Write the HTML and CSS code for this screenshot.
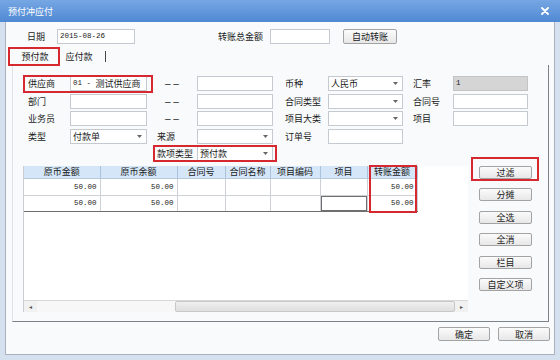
FILE: index.html
```html
<!DOCTYPE html>
<html lang="zh">
<head>
<meta charset="utf-8">
<link rel="stylesheet" href="styles.css">
</head>
<body>
<div class="window">
  <div class="titlebar">
    <span class="title">预付冲应付</span>
    <svg class="close" width="8" height="8" viewBox="0 0 8 8"><path d="M1 1L7 7M7 1L1 7" stroke="#fff" stroke-width="1.8" stroke-linecap="round"/></svg>
  </div>
  <div class="client">
    <div class="toprow">
      <span class="lbl date-lbl">日期</span>
      <div class="input date-in"><span class="num">2015-08-26</span></div>
      <span class="lbl total-lbl">转账总金额</span>
      <div class="input total-in"></div>
      <button class="btn auto-btn">自动转账</button>
    </div>
    <div class="tabs">
      <div class="tab hl hl-tab">预付款</div>
      <div class="tab tab2">应付款</div>
      <div class="tab-sep"></div>
    </div>
    <div class="panel">
      <div class="form">
        <div class="frow">
          <div class="pair hl hl-supp">
            <span class="w1">供应商</span>
            <div class="input w2"><span class="num">01 - </span><span>测试供应商</span></div>
          </div>
          <span class="w3 dash">– –</span>
          <div class="input w4"></div>
          <span class="w5">币种</span>
          <div class="input select w6"><span>人民币</span><svg width="5" height="3" viewBox="0 0 5 3"><path d="M0 0H5L2.5 3Z" fill="#666"/></svg></div>
          <span class="w7">汇率</span>
          <div class="input gray w8"><span class="num">1</span></div>
        </div>
        <div class="frow">
          <span class="w1">部门</span>
          <div class="input w2"></div>
          <span class="w3 dash">– –</span>
          <div class="input w4"></div>
          <span class="w5">合同类型</span>
          <div class="input select w6"><span></span><svg width="5" height="3" viewBox="0 0 5 3"><path d="M0 0H5L2.5 3Z" fill="#666"/></svg></div>
          <span class="w7">合同号</span>
          <div class="input w8"></div>
        </div>
        <div class="frow">
          <span class="w1">业务员</span>
          <div class="input w2"></div>
          <span class="w3 dash">– –</span>
          <div class="input w4"></div>
          <span class="w5">项目大类</span>
          <div class="input select w6"><span></span><svg width="5" height="3" viewBox="0 0 5 3"><path d="M0 0H5L2.5 3Z" fill="#666"/></svg></div>
          <span class="w7">项目</span>
          <div class="input w8"></div>
        </div>
        <div class="frow">
          <span class="w1">类型</span>
          <div class="input select w2"><span>付款单</span><svg width="5" height="3" viewBox="0 0 5 3"><path d="M0 0H5L2.5 3Z" fill="#666"/></svg></div>
          <span class="w3">来源</span>
          <div class="input select w4"><span></span><svg width="5" height="3" viewBox="0 0 5 3"><path d="M0 0H5L2.5 3Z" fill="#666"/></svg></div>
          <span class="w5">订单号</span>
          <div class="input w6"></div>
        </div>
        <div class="frow">
          <span class="w1"></span>
          <span class="w2"></span>
          <div class="pair hl hl-kind">
            <span class="w3">款项类型</span>
            <div class="input select w4"><span>预付款</span><svg width="5" height="3" viewBox="0 0 5 3"><path d="M0 0H5L2.5 3Z" fill="#666"/></svg></div>
          </div>
        </div>
      </div>
      <div class="lower">
        <div class="grid">
          <table>
            <colgroup>
              <col class="c-a"><col class="c-b"><col class="c-c"><col class="c-d"><col class="c-e"><col class="c-f"><col class="c-g">
            </colgroup>
            <thead>
              <tr><th>原币金额</th><th>原币余额</th><th>合同号</th><th>合同名称</th><th>项目编码</th><th>项目</th><th>转账金额</th></tr>
            </thead>
            <tbody>
              <tr class="r1"><td class="num-cell">50.00</td><td class="num-cell">50.00</td><td></td><td></td><td></td><td></td><td class="num-cell">50.00</td></tr>
              <tr class="r2"><td class="num-cell">50.00</td><td class="num-cell">50.00</td><td></td><td></td><td></td><td class="cur"></td><td class="num-cell">50.00</td></tr>
            </tbody>
          </table>
          <div class="col-mark"></div>
          <div class="grid-fill"></div>
          <div class="hscroll">
            <span class="sb-arrow">◂</span>
            <span class="sb-gap"></span>
            <span class="sb-thumb"></span>
            <span class="sb-arrow">▸</span>
          </div>
        </div>
        <div class="side">
          <button class="btn side-btn hl hl-filter">过滤</button>
          <button class="btn side-btn">分摊</button>
          <button class="btn side-btn">全选</button>
          <button class="btn side-btn">全消</button>
          <button class="btn side-btn">栏目</button>
          <button class="btn side-btn">自定义项</button>
        </div>
      </div>
    </div>
    <div class="footer">
      <button class="btn foot-btn">确定</button>
      <button class="btn foot-btn">取消</button>
    </div>
  </div>
</div>
</body>
</html>
```

FILE: styles.css
```css
* { box-sizing: border-box; }
html, body { margin: 0; padding: 0; }
body {
  font-family: "Noto Sans CJK SC", "Noto Sans", sans-serif;
  font-size: 9px;
  line-height: 11px;
  color: #1a1a1a;
  background: #ffffff;
}
.window {
  width: 560px;
  height: 360px;
  background: #d5e1ef;
  display: flex;
  flex-direction: column;
}
.titlebar {
  height: 22px;
  flex: 0 0 22px;
  background: linear-gradient(#76a7e4, #4f88d3);
  color: #fff;
  display: flex;
  align-items: center;
  justify-content: space-between;
  padding: 0 11px 0 8px;
}
.title { font-size: 9px; }
.client {
  flex: 1;
  margin: 0 5px 5px 5px;
  background: #f8fafc;
  border: 1px solid #a9b3bf;
  border-top: none;
  display: flex;
  flex-direction: column;
}
.num { font-family: "Liberation Mono", monospace; font-size: 7.5px; white-space: pre; }
.input {
  height: 15px;
  background: #fff;
  border: 1px solid #c5cad1;
  display: flex;
  align-items: center;
  padding: 0 2px;
  white-space: nowrap;
  overflow: hidden;
}
.input.gray { background: #d5d5d5; border-color: #c4c4c4; }
.select { justify-content: space-between; padding-right: 4px; }
.btn {
  font-family: "Noto Sans CJK SC", sans-serif;
  font-size: 9px;
  line-height: 11px;
  color: #222;
  background: linear-gradient(#fbfbfb, #e7e7e7);
  border: 1px solid #a3a3a3;
  border-radius: 2px;
  padding: 0;
  margin: 0;
}
.toprow {
  display: flex;
  align-items: center;
  height: 15px;
  margin-top: 7px;
  padding-left: 21px;
}
.date-lbl { width: 30px; }
.date-in { width: 78px; }
.total-lbl { margin-left: 83px; width: 52px; }
.total-in { width: 60px; }
.auto-btn { margin-left: 13px; width: 54px; height: 15px; }

.tabs {
  display: flex;
  align-items: center;
  height: 18px;
  margin-top: 3px;
  padding-left: 4px;
}
.tab {
  height: 18px;
  display: flex;
  align-items: center;
  justify-content: center;
  width: 50px;
}
.tab2 { width: 38px; }
.tab-sep { width: 1px; height: 11px; background: #444; margin-left: 7px; }

.hl { position: relative; }
.hl::after {
  content: "";
  position: absolute;
  border: 2px solid #d6282f;
  pointer-events: none;
}
.hl-tab::after { left: -2px; right: 0; top: 0; bottom: -1px; }
.hl-supp::after { left: 0; right: -6px; top: -1px; bottom: -2px; }
.hl-kind::after { left: 6px; right: -4px; top: -1px; bottom: -1px; }
.hl-filter::after { left: -9px; right: -8px; top: -10px; bottom: -3px; }

.panel {
  height: 257px;
  flex: 0 0 257px;
  margin: 0 5px 0 6px;
  border-left: 1px solid #dfe3e8;
  border-right: 1px solid #7d8289;
  border-bottom: 1px solid #7d8289;
  padding: 10px 0 0 10px;
}
.frow {
  display: flex;
  align-items: center;
  height: 17.5px;
}
.pair { display: flex; align-items: center; height: 15px; }
.w1 { width: 47px; padding-left: 5px; }
.w2 { width: 77px; }
.w3 { width: 50px; padding-left: 10px; white-space: nowrap; }
.w4 { width: 76px; }
.w5 { width: 55px; padding-left: 12px; white-space: nowrap; }
.w6 { width: 75px; }
.w7 { width: 50px; padding-left: 10px; }
.w8 { width: 75px; }
.dash {
  padding-left: 18px;
  font-family: "Liberation Sans", sans-serif;
  font-size: 10px;
  color: #2a2a2a;
  white-space: pre;
}

.lower {
  display: flex;
  margin-top: 3px;
}
.grid {
  position: relative;
  width: 445px;
  height: 146px;
  background: #fff;
  border-left: 1px solid #c9ccd0;
  display: flex;
  flex-direction: column;
}
table {
  border-collapse: collapse;
  table-layout: fixed;
  width: 393px;
}
.c-a { width: 76px; }
.c-b { width: 77px; }
.c-c { width: 48px; }
.c-d { width: 45px; }
.c-e { width: 50px; }
.c-f { width: 47px; }
.c-g { width: 50px; }
th {
  height: 13px;
  padding: 0;
  font-weight: normal;
  background: #d4e6f7;
  border-right: 1px solid #a9c1d9;
  border-bottom: 1px solid #b7c9dc;
  text-align: center;
  white-space: nowrap;
  overflow: hidden;
}
td {
  padding: 0 3px 0 0;
  border-right: 1px solid #cdd0d4;
  border-bottom: 1px solid #cdd0d4;
}
.r1 td { height: 17px; }
.r2 td { height: 16px; border-bottom: 1px solid #6f6f6f; }
.num-cell {
  text-align: right;
  font-family: "Liberation Mono", monospace;
  font-size: 7.5px;
}
td.cur { box-shadow: inset 0 0 0 1px #6f6f6f; }
.col-mark {
  position: absolute;
  left: 345px;
  top: -1px;
  width: 48px;
  height: 48px;
  border: 2px solid #d6282f;
}
.grid-fill { flex: 1; }
.hscroll {
  height: 12px;
  flex: 0 0 12px;
  display: flex;
  align-items: stretch;
  background: #f1f1f1;
  border-top: 1px solid #d8d8d8;
}
.sb-arrow {
  width: 13px;
  font-size: 6px;
  line-height: 11px;
  text-align: center;
  color: #555;
}
.sb-gap { flex: 0 0 138px; background: #f7f7f7; }
.sb-thumb {
  flex: 1;
  background: linear-gradient(#f0f0f0, #dedede);
  border: 1px solid #c8c8c8;
  border-radius: 2px;
}
.side {
  display: flex;
  flex-direction: column;
  gap: 9.5px;
  margin-left: 11px;
}
.side-btn { width: 53px; height: 13px; }

.footer {
  display: flex;
  justify-content: flex-end;
  gap: 8px;
  margin-top: 5px;
  padding-right: 4px;
}
.foot-btn { width: 52px; height: 14px; }
```
